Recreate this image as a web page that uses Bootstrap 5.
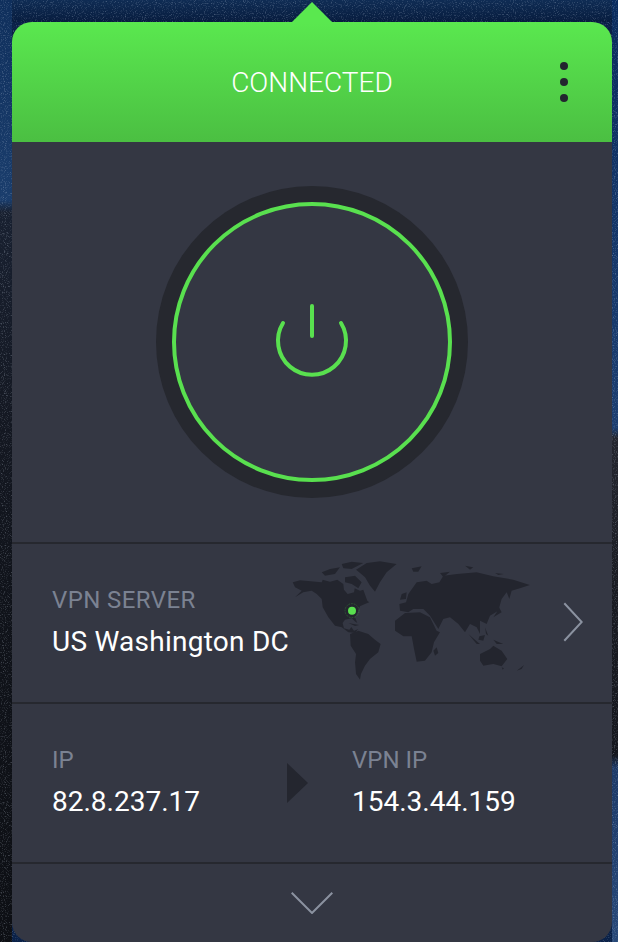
<!DOCTYPE html>
<html lang="en">
<head>
    <meta charset="UTF-8">
    <meta name="viewport" content="width=device-width, initial-scale=1.0">
    <title>VPN Connected</title>
    <link href="https://cdn.jsdelivr.net/npm/bootstrap@5.3.0/dist/css/bootstrap.min.css" rel="stylesheet">
    <style>
        html, body {
            height: 942px;
            overflow: hidden;
        }

        /* Desktop wallpaper showing around the window */
        body {
            padding: 22px 6px 0 12px;
            font-family: Roboto, "Liberation Sans", sans-serif;
            background-color: #0a2148;
            background-image:
                url("data:image/svg+xml,%3Csvg xmlns='http://www.w3.org/2000/svg' width='618' height='942'%3E%3Cfilter id='n'%3E%3CfeTurbulence type='fractalNoise' baseFrequency='.9' numOctaves='2'/%3E%3CfeColorMatrix values='0 0 0 0 .6 0 0 0 0 .68 0 0 0 0 .8 0 0 0 .9 -.48'/%3E%3C/filter%3E%3Crect width='618' height='942' filter='url(%23n)'/%3E%3C/svg%3E"),
                linear-gradient(to bottom, #0f2f5c 0, #1a3d6c 200px, #182030 212px, #141822 420px, #10131a 600px, #0d0f14 942px),
                linear-gradient(to bottom, #0a2c5e 0, #1c3e70 428px, #24262f 438px, #191b22 600px, #15171e 755px, #1d3a68 768px, #274878 942px),
                linear-gradient(to bottom, #0f2c54 0, #071c3e 22px);
            background-size: 100% 100%, 12px 100%, 6px 100%, 100% 22px;
            background-position: left top, left top, right top, left top;
            background-repeat: no-repeat;
        }

        .vpn-window {
            height: 920px;
            background-color: #343743;
            border-radius: 20px;
        }

        .vpn-head {
            height: 120px;
            padding-top: 2px;
            border-radius: 20px 20px 0 0;
            background: linear-gradient(to bottom, #5ae84f, #4bbf42);
            color: #fff;
            font-size: 28px;
            font-weight: 300;
        }

        /* little pointer above the window */
        .vpn-head::before {
            content: "";
            position: absolute;
            left: 280px;
            top: -20px;
            width: 40px;
            height: 20px;
            background-color: #5ae84f;
            clip-path: polygon(50% 0, 100% 100%, 0 100%);
        }

        .menu-dots {
            right: 44px;
            top: 40px;
            width: 8px;
        }

        .menu-dots span {
            width: 8px;
            height: 8px;
            border-radius: 50%;
            background-color: #23252f;
        }

        .power-area {
            height: 400px;
        }

        .power-outer {
            width: 312px;
            height: 312px;
            border-radius: 50%;
            background-color: #26282f;
        }

        .power-ring {
            width: 280px;
            height: 280px;
            border-radius: 50%;
            border: 4px solid #59e04f;
            background-color: #343743;
        }

        .info-row {
            height: 160px;
            border-top: 2px solid #26282f;
            padding-left: 40px;
        }

        .info-label {
            color: #7b8292;
            font-size: 24px;
            line-height: 26px;
        }

        .info-value {
            color: #fff;
            font-size: 28px;
            line-height: 32px;
            margin-top: 13px;
            white-space: nowrap;
        }

        .server-col {
            width: 240px;
            margin-bottom: 1px;
        }

        .server-col .info-label {
            letter-spacing: .4px;
        }

        .server-col .info-value {
            letter-spacing: .25px;
        }

        .world-map {
            width: 248px;
            height: 140px;
            margin-bottom: 8px;
        }

        .chevron-next {
            margin-left: 23px;
            margin-bottom: 2px;
        }

        .ip-col {
            width: 235px;
            margin-bottom: 1px;
        }

        .vpn-ip-col {
            margin-left: 44px;
            margin-bottom: 1px;
        }

        .bottom-row {
            height: 80px;
            border-top: 2px solid #26282f;
        }
    </style>
</head>
<body>

<div class="vpn-window">

    <!-- Header -->
    <div class="vpn-head position-relative d-flex align-items-center justify-content-center">
        <span>CONNECTED</span>
        <div class="menu-dots position-absolute d-flex flex-column gap-2">
            <span></span>
            <span></span>
            <span></span>
        </div>
    </div>

    <!-- Power button -->
    <div class="power-area d-flex align-items-center justify-content-center">
        <div class="power-outer d-flex align-items-center justify-content-center">
            <div class="power-ring d-flex align-items-center justify-content-center">
                <svg width="80" height="80" viewBox="0 0 80 80" fill="none" stroke="#59e04f" stroke-width="4" stroke-linecap="round">
                    <path d="M40 4V34"/>
                    <path d="M11 21A34 34 0 1 0 69 21"/>
                </svg>
            </div>
        </div>
    </div>

    <!-- Server row -->
    <div class="info-row d-flex align-items-center">
        <div class="server-col">
            <div class="info-label">VPN SERVER</div>
            <div class="info-value">US Washington DC</div>
        </div>
        <svg class="world-map" viewBox="36 0 744 420">
            <defs>
                <pattern id="mapDots" width="6" height="6" patternUnits="userSpaceOnUse">
                    <rect width="6" height="6" fill="#22242d"/>
                    <circle cx="3" cy="3" r="1.4" fill="#282a34"/>
                </pattern>
            </defs>
            <g fill="url(#mapDots)">
                <path d="M38 100L60 94 85 96 125 100 128 92 150 98 172 92 190 105 192 122 203 135 222 130 224 118 240 125 250 122 262 155 268 160 255 165 240 172 233 190 225 205 232 222 226 218 215 208 195 212 188 222 192 238 208 242 214 234 222 245 235 240 225 252 205 250 185 235 165 230 145 205 128 175 125 150 110 135 95 125 70 130 45 145 65 125 45 115Z"/>
                <path d="M228 62L260 42 300 37 350 45 320 70 300 100 285 128 270 110 255 85 240 72Z"/>
                <path d="M125 70L150 60 180 55 165 75 135 80Z"/>
                <path d="M185 45L215 38 250 42 215 60 190 58Z"/>
                <path d="M195 85L225 80 245 100 235 118 215 105 195 100Z"/>
                <path d="M205 222L238 228 225 231Z"/>
                <path d="M210 255L235 245 265 255 285 272 302 285 295 310 270 330 255 350 243 375 240 392 228 375 225 340 228 315 212 290Z"/>
                <path d="M345 215L375 192 420 190 450 205 470 245 480 250 462 280 455 310 435 335 410 338 402 300 395 262 370 262 345 245Z"/>
                <path d="M470 295L475 312 465 320 460 305Z"/>
                <path d="M360 185L358 165 378 160 385 135 410 100 440 95 455 105 478 100 490 80 530 75 590 70 640 82 700 92 750 108 720 118 695 125 688 150 680 130 665 150 655 185 630 200 620 225 600 215 600 255 590 235 570 225 555 250 535 225 510 205 490 210 475 240 450 200 430 180 400 180 385 190Z"/>
                <path d="M655 170L665 190 640 205 650 190Z"/>
                <path d="M565 255L600 285 590 285Z"/>
                <path d="M598 262L615 258 610 275 595 272Z"/>
                <path d="M615 235L625 260 618 255Z"/>
                <path d="M640 272L670 285 650 285Z"/>
                <path d="M600 315L630 300 640 290 665 305 682 330 665 352 640 345 610 350 600 335Z"/>
                <path d="M710 365L732 348 725 360Z"/>
                <path d="M665 355L672 358 668 362Z"/>
                <path d="M395 58L425 52 415 68 400 68Z"/>
                <path d="M365 135L380 130 378 150 360 152Z"/>
                <path d="M480 72L510 68 490 85Z"/>
                <path d="M555 50L580 55 570 62Z"/>
                <path d="M645 72L672 75 655 78Z"/>
            </g>
            <circle cx="216" cy="185" r="21" fill="none" stroke="#59e04f" stroke-width="2" stroke-dasharray="2 3" opacity=".55"/>
            <circle cx="216" cy="185" r="12" fill="#59e04f"/>
        </svg>
        <svg class="chevron-next" width="20" height="40" viewBox="0 0 20 40" fill="none" stroke="#8b92a0" stroke-width="2">
            <path d="M1.3 1.3L18.7 20 1.3 38.7"/>
        </svg>
    </div>

    <!-- IP row -->
    <div class="info-row d-flex align-items-center">
        <div class="ip-col">
            <div class="info-label">IP</div>
            <div class="info-value">82.8.237.17</div>
        </div>
        <svg width="21" height="40" viewBox="0 0 21 40" fill="#24262f">
            <path d="M0 0L21 20 0 40Z"/>
        </svg>
        <div class="vpn-ip-col">
            <div class="info-label">VPN IP</div>
            <div class="info-value">154.3.44.159</div>
        </div>
    </div>

    <!-- Expand -->
    <div class="bottom-row d-flex justify-content-center align-items-center">
        <svg width="42" height="22" viewBox="0 0 42 22" fill="none" stroke="#8b92a0" stroke-width="2">
            <path d="M0.7 0.7L21 21 41.3 0.7"/>
        </svg>
    </div>

</div>

<script src="https://cdn.jsdelivr.net/npm/bootstrap@5.3.0/dist/js/bootstrap.bundle.min.js"></script>
</body>
</html>
